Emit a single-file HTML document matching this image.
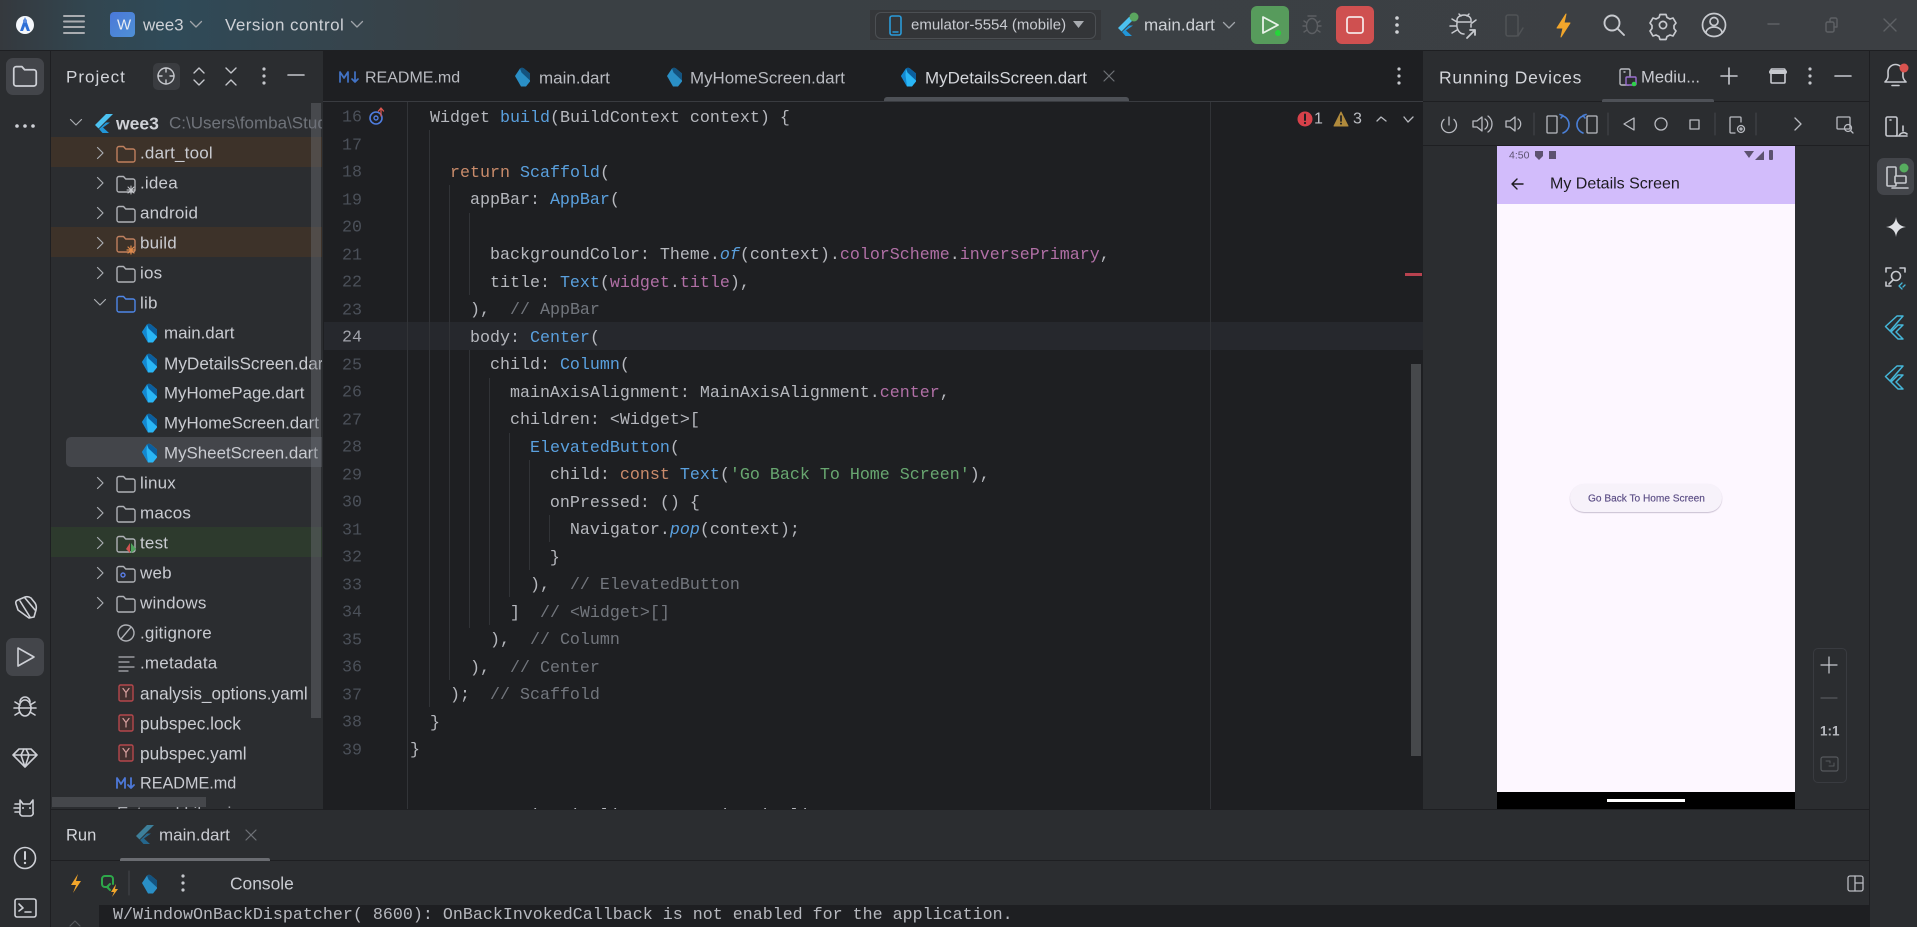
<!DOCTYPE html>
<html><head><meta charset="utf-8"><title>Android Studio</title>
<style>
html,body{margin:0;padding:0;background:#2b2d30;width:1917px;height:927px;overflow:hidden}
body{font-family:"Liberation Sans",sans-serif;color:#cdd0d6;position:relative}
.b{position:absolute}
.t{position:absolute;white-space:nowrap;line-height:24px;transform:translateY(-11.5px);font-size:17px;color:#c9cbd1}
pre{margin:0;font-family:"Liberation Mono",monospace;font-size:16.67px;line-height:27.5px;color:#b6b8be;position:absolute}
.k{color:#c98b6b}.c{color:#5aa0de}.f{color:#b06fa5}.s{color:#68a670}.m{color:#72767d}.i{color:#5aa0de;font-style:italic}
.n{position:absolute;left:330px;width:32px;text-align:right;font-family:"Liberation Mono",monospace;font-size:16.67px;line-height:24px;transform:translateY(-10.5px);color:#4b5059}
.g{position:absolute;width:1px;background:#313337}
svg{position:absolute;left:0;top:0}
</style></head><body>
<!-- top bar -->
<div class="b" style="left:0;top:0;width:1917px;height:50px;background:linear-gradient(90deg,#35393e 0,#324650 90px,#2f4a58 170px,#344650 290px,#3a4044 480px,#3c3f43 100%)"></div>
<div class="b" style="left:0;top:50px;width:1917px;height:1px;background:#1e1f22"></div>
<!-- panels -->
<div class="b" style="left:50px;top:51px;width:273px;height:758px;background:#2b2d30"></div>
<div class="b" style="left:323px;top:51px;width:1100px;height:758px;background:#1e1f22"></div>
<div class="b" style="left:1423px;top:51px;width:447px;height:758px;background:#2b2d30"></div>
<div class="b" style="left:50px;top:51px;width:1px;height:876px;background:#1e1f22"></div>
<div class="b" style="left:1869px;top:51px;width:1px;height:876px;background:#1e1f22"></div>
<div class="b" style="left:323px;top:51px;width:1px;height:758px;background:#1e1f22"></div>
<div class="b" style="left:323px;top:51px;width:1100px;height:50px;background:#1e1f22"></div>
<div class="b" style="left:323px;top:101px;width:1100px;height:1px;background:#393b40"></div>
<div class="b" style="left:1423px;top:101px;width:446px;height:1px;background:#1e1f22"></div>
<div class="b" style="left:1423px;top:145px;width:446px;height:1px;background:#1e1f22"></div>
<div class="b" style="left:51px;top:809px;width:1818px;height:1px;background:#1e1f22"></div>
<div class="b" style="left:51px;top:860px;width:1818px;height:1px;background:#1e1f22"></div>
<div class="b" style="left:99px;top:905px;width:1770px;height:22px;background:#1e1f22"></div>

<!-- sidebar active backgrounds -->
<div class="b" style="left:6px;top:58px;width:38px;height:37px;background:#43454a;border-radius:7px"></div>
<div class="b" style="left:6px;top:638px;width:38px;height:38px;background:#43454a;border-radius:7px"></div>
<div class="b" style="left:1877px;top:158px;width:37px;height:37px;background:#43454a;border-radius:7px"></div>
<div class="b" style="left:153px;top:63px;width:27px;height:27px;background:#3a3c40;border-radius:5px"></div>

<!-- top bar text -->
<div class="b" style="left:110px;top:12px;width:25px;height:25px;border-radius:4px;background:linear-gradient(135deg,#4a78d8,#4f90d6)"></div>
<div class="t" style="left:117px;top:25px;font-size:15px;color:#e8edf5">W</div>
<div class="t" style="left:143px;top:25px;color:#ced1d6">wee3</div>
<div class="t" style="left:225px;top:25px;letter-spacing:.45px;color:#ced1d6">Version control</div>
<div class="b" style="left:870px;top:10px;width:231px;height:30px;background:#35373a"></div>
<div class="b" style="left:875px;top:12px;width:219px;height:25px;border:1px solid #4c4f53;border-radius:6px;background:#333538"></div>
<div class="t" style="left:911px;top:25px;font-size:15px;color:#c9cbd1">emulator-5554 (mobile)</div>
<div class="t" style="left:1144px;top:25px;color:#ced1d6">main.dart</div>
<div class="b" style="left:1251px;top:6px;width:38px;height:38px;border-radius:6px;background:#579b5c"></div>
<div class="b" style="left:1336px;top:6px;width:38px;height:38px;border-radius:6px;background:#cf5050"></div>

<!-- project header and tree -->
<div class="t" style="left:66px;top:77px;letter-spacing:1px;color:#d3d5da">Project</div>
<div class="b" style="left:51px;top:102px;width:271px;height:707px;overflow:hidden">
  <div class="b" style="left:0;top:35px;width:271px;height:30px;background:#3d3229"></div>
  <div class="b" style="left:0;top:125px;width:271px;height:30px;background:#3d3229"></div>
  <div class="b" style="left:0;top:425px;width:271px;height:30px;background:#2d3a2d"></div>
  <div class="b" style="left:15px;top:335px;width:265px;height:30px;background:#43454a;border-radius:5px"></div>
  <div class="t" style="left:65px;top:21px;font-weight:bold;font-size:17.5px;color:#cfd1d6">wee3</div>
  <div class="t" style="left:118px;top:21px;font-size:17px;color:#6f737a">C:\Users\fomba\Studio</div>
  <div class="t" style="left:89px;top:51px;letter-spacing:.2px">.dart_tool</div>
  <div class="t" style="left:89px;top:81px;letter-spacing:.2px">.idea</div>
  <div class="t" style="left:89px;top:111px;letter-spacing:.2px">android</div>
  <div class="t" style="left:89px;top:141px;letter-spacing:.2px">build</div>
  <div class="t" style="left:89px;top:171px;letter-spacing:.2px">ios</div>
  <div class="t" style="left:89px;top:201px;letter-spacing:.2px">lib</div>
  <div class="t" style="left:113px;top:231px;font-size:16.9px">main.dart</div>
  <div class="t" style="left:113px;top:261px;font-size:17.2px">MyDetailsScreen.dart</div>
  <div class="t" style="left:113px;top:291px;font-size:16.85px">MyHomePage.dart</div>
  <div class="t" style="left:113px;top:321px;font-size:16.9px">MyHomeScreen.dart</div>
  <div class="t" style="left:113px;top:351px;font-size:16.9px">MySheetScreen.dart</div>
  <div class="t" style="left:89px;top:381px;letter-spacing:.2px">linux</div>
  <div class="t" style="left:89px;top:411px;letter-spacing:.2px">macos</div>
  <div class="t" style="left:89px;top:441px;letter-spacing:.2px">test</div>
  <div class="t" style="left:89px;top:471px;letter-spacing:.2px">web</div>
  <div class="t" style="left:89px;top:501px;letter-spacing:.2px">windows</div>
  <div class="t" style="left:89px;top:531px;letter-spacing:.2px">.gitignore</div>
  <div class="t" style="left:89px;top:561px;letter-spacing:.2px">.metadata</div>
  <div class="t" style="left:89px;top:591px;font-size:17.15px">analysis_options.yaml</div>
  <div class="t" style="left:89px;top:621px;font-size:17.3px">pubspec.lock</div>
  <div class="t" style="left:89px;top:651px;font-size:17.3px">pubspec.yaml</div>
  <div class="t" style="left:89px;top:681px;font-size:16.2px">README.md</div>
  <div class="t" style="left:66px;top:711px;color:#a9abb0">External Libraries</div>
  <div class="b" style="left:260px;top:1px;width:10px;height:615px;background:rgba(110,112,118,.42)"></div>
  <div class="b" style="left:1px;top:695px;width:154px;height:10px;background:#45474b"></div>
</div>

<!-- editor tabs -->
<div class="t" style="left:365px;top:77.5px;font-size:16px;color:#b9bbc1">README.md</div>
<div class="t" style="left:539px;top:77.5px;color:#b9bbc1">main.dart</div>
<div class="t" style="left:690px;top:77.5px;font-size:16.9px;color:#b9bbc1">MyHomeScreen.dart</div>
<div class="t" style="left:925px;top:77.5px;font-size:16.95px;color:#d3d5da">MyDetailsScreen.dart</div>
<div class="b" style="left:884px;top:97px;width:245px;height:4px;background:#4e5157;border-radius:3px 3px 0 0"></div>

<!-- editor -->
<div class="b" style="left:324px;top:322px;width:1099px;height:28px;background:#26282d"></div>
<div class="b" style="left:1210px;top:102px;width:1px;height:707px;background:#313337"></div>
<div class="g" style="left:407px;top:102px;height:707px;background:#323438"></div>
<div class="g" style="left:429px;top:130px;height:577px"></div>
<div class="g" style="left:449px;top:185px;height:495px"></div>
<div class="g" style="left:469px;top:213px;height:82px"></div>
<div class="g" style="left:469px;top:350px;height:278px"></div>
<div class="g" style="left:489px;top:378px;height:247px"></div>
<div class="g" style="left:509px;top:433px;height:164px"></div>
<div class="g" style="left:529px;top:460px;height:110px"></div>
<div class="g" style="left:549px;top:515px;height:27px"></div>

<div class="n" style="top:117px">16</div><div class="n" style="top:144.5px">17</div><div class="n" style="top:172px">18</div><div class="n" style="top:199.5px">19</div><div class="n" style="top:227px">20</div><div class="n" style="top:254.5px">21</div><div class="n" style="top:282px">22</div><div class="n" style="top:309.5px">23</div><div class="n" style="top:337px;color:#a1a3ab">24</div><div class="n" style="top:364.5px">25</div><div class="n" style="top:392px">26</div><div class="n" style="top:419.5px">27</div><div class="n" style="top:447px">28</div><div class="n" style="top:474.5px">29</div><div class="n" style="top:502px">30</div><div class="n" style="top:529.5px">31</div><div class="n" style="top:557px">32</div><div class="n" style="top:584.5px">33</div><div class="n" style="top:612px">34</div><div class="n" style="top:639.5px">35</div><div class="n" style="top:667px">36</div><div class="n" style="top:694.5px">37</div><div class="n" style="top:722px">38</div><div class="n" style="top:749.5px">39</div>

<pre style="left:410px;top:104.75px">  Widget <span class="c">build</span>(BuildContext context) {

    <span class="k">return</span> <span class="c">Scaffold</span>(
      appBar: <span class="c">AppBar</span>(

        backgroundColor: Theme.<span class="i">of</span>(context).<span class="f">colorScheme</span>.<span class="f">inversePrimary</span>,
        title: <span class="c">Text</span>(<span class="f">widget</span>.<span class="f">title</span>),
      ),  <span class="m">// AppBar</span>
      body: <span class="c">Center</span>(
        child: <span class="c">Column</span>(
          mainAxisAlignment: MainAxisAlignment.<span class="f">center</span>,
          children: &lt;Widget&gt;[
            <span class="c">ElevatedButton</span>(
              child: <span class="k">const</span> <span class="c">Text</span>(<span class="s">'Go Back To Home Screen'</span>),
              onPressed: () {
                Navigator.<span class="i">pop</span>(context);
              }
            ),  <span class="m">// ElevatedButton</span>
          ]  <span class="m">// &lt;Widget&gt;[]</span>
        ),  <span class="m">// Column</span>
      ),  <span class="m">// Center</span>
    );  <span class="m">// Scaffold</span>
  }
}</pre>
<div class="b" style="left:324px;top:802px;width:1099px;height:7px;overflow:hidden">
<pre style="left:186px;top:1.25px">mainAxisAlignment: MainAxisAlignment.center,</pre></div>

<div class="t" style="left:1314px;top:119px;font-size:16px;color:#bcbec4">1</div>
<div class="t" style="left:1353px;top:119px;font-size:16px;color:#bcbec4">3</div>
<div class="b" style="left:1405px;top:273px;width:17px;height:3px;background:#b8424f"></div>
<div class="b" style="left:1411px;top:364px;width:10px;height:392px;background:#46484b"></div>

<!-- running devices -->
<div class="t" style="left:1439px;top:77px;letter-spacing:.72px;font-size:17.5px;color:#d3d5da">Running Devices</div>
<div class="t" style="left:1641px;top:77px;font-size:16.6px;color:#c9cbd1">Mediu...</div>
<div class="b" style="left:1602px;top:99px;width:112px;height:3px;background:#4e5157;border-radius:2px 2px 0 0"></div>

<!-- phone -->
<div class="b" style="left:1497px;top:146px;width:298px;height:663px;background:#000;overflow:hidden">
  <div class="b" style="left:0;top:0;width:298px;height:58px;background:#d2bcfb"></div>
  <div class="b" style="left:0;top:58px;width:298px;height:588px;background:#fdf7ff"></div>
  <div class="b" style="left:110px;top:653px;width:78px;height:3px;background:#fff"></div>
  <div class="t" style="left:12px;top:8.500px;font-size:10.5px;color:#5d5270">4:50</div>
  <div class="t" style="left:53px;top:38px;font-size:16px;color:#1d1b20">My Details Screen</div>
  <div class="b" style="left:73px;top:338px;width:152px;height:28px;border-radius:15px;background:#f7f2fa;box-shadow:0 1px 1px rgba(90,70,110,.3),0 0 1px rgba(90,70,110,.08)"></div>
  <div class="t" style="left:91px;top:353px;font-size:10.15px;color:#5b4d85;-webkit-text-stroke:.15px #5b4d85">Go Back To Home Screen</div>
</div>
<div class="b" style="left:1813px;top:648px;width:32px;height:133px;border:1px solid #393b40;border-radius:5px"></div>
<div class="t" style="left:1820px;top:731px;font-size:13.5px;font-weight:bold;color:#b8bac0">1:1</div>

<!-- bottom -->
<div class="t" style="left:66px;top:835px;font-size:16.5px;color:#d3d5da">Run</div>
<div class="t" style="left:159px;top:835px;color:#c9cbd1">main.dart</div>
<div class="b" style="left:120px;top:858px;width:150px;height:3px;background:#6a6c71;border-radius:2px 2px 0 0"></div>
<div class="t" style="left:230px;top:882.5px;font-size:17.4px;color:#c9cbd1">Console</div>
<pre style="left:113px;top:902.25px">W/WindowOnBackDispatcher( 8600): OnBackInvokedCallback is not enabled for the application.</pre>

<!-- icons -->
<svg width="1917" height="927" viewBox="0 0 1917 927" fill="none" stroke-linecap="round" stroke-linejoin="round">
<defs>
<path id="fo" d="M-9 -5.5a2 2 0 0 1 2-2h4.5l2.2 2.5H7a2 2 0 0 1 2 2V6a2 2 0 0 1-2 2H-7a2 2 0 0 1-2-2z"/>
<path id="cr" d="M-2.5-5.5L3 0L-2.5 5.5"/>
<path id="cd" d="M-5.5-2.5L0 3L5.5-2.5"/>
<g id="dart"><path d="M-8-1L-3-8.5Q-1-10 1-8.5L7-3.5V4.500L3 9.500H-2Z" fill="#29b6f6"/><path d="M-3-8.500Q-1-10 1-8.500L7-3.500V3.500L-1.500-4.500Z" fill="#0b5f9e"/><path d="M-8-1L-3-8.500L-3.500-2L-2 9.500Z" fill="#1487cf"/></g>
<g id="dartd"><path d="M-8-1L-3-8.500Q-1-10 1-8.500L7-3.500V4.500L3 9.500H-2Z" fill="#2a8fc6"/><path d="M-3-8.500Q-1-10 1-8.500L7-3.500V3.500L-1.500-4.500Z" fill="#14537f"/></g>
<g id="fl"><path d="M3-10L-8 1L-4.5 4.5L10-10Z" fill="#4cc2f1"/><path d="M3-1.5L-4 5L-0.5 9H6L0 3.5L7-1.5Z" fill="#2196d8"/></g>
<g id="yaml"><rect x="-7" y="-8" width="14" height="16" rx="1.5" stroke="#b5474c" stroke-width="1.4" fill="#43302f"/><path d="M-3-4.5L0-.5L3-4.5M0-.5V4" stroke="#d8a0a0" stroke-width="1.2"/></g>
<path id="fout" d="M12-10H18L5 5L.5 .5ZM13-1H18L11 6L18 13H13L6 6Z"/>
</defs>
<!-- top left -->
<circle cx="25" cy="25" r="9" fill="#f4f7fb"/><path d="M25 17L20 31H23L25 26L27 31H30Z" fill="#2e6fd6"/><circle cx="25" cy="21" r="2" fill="#5d8de0"/>
<g stroke="#a9acb0" stroke-width="2"><path d="M64 16H84M64 21.5H84M64 27H84M64 33H84"/></g>
<g stroke="#a0a5aa" stroke-width="1.3"><use href="#cd" x="196" y="24"/><use href="#cd" x="357" y="24"/><use href="#cd" x="1229" y="25"/></g>
<!-- device selector -->
<rect x="890" y="16" width="11" height="19" rx="2" stroke="#2a9ad8" stroke-width="1.6"/><path d="M893 32H898" stroke="#2a9ad8" stroke-width="1.4"/>
<path d="M1073 21H1084L1078.5 28Z" fill="#a8abb0"/>
<use href="#fl" transform="translate(1126,27)"/><circle cx="1134" cy="17" r="4.5" fill="#5ba65f"/>
<path d="M1263 17L1278 25L1263 33Z" stroke="#e8f2e8" stroke-width="1.8"/><circle cx="1278" cy="33" r="3" fill="#25d63a"/>
<g stroke="#5c5f63" stroke-width="1.4"><ellipse cx="1312" cy="26" rx="5.5" ry="7.5"/><path d="M1308 16L1316 16M1304 21L1307 23M1320 21L1317 23M1303 26H1306M1321 26H1318M1304 32L1307 30M1320 32L1317 30"/></g>
<rect x="1347" y="17" width="16" height="16" rx="2.5" stroke="#f5e4e4" stroke-width="1.8"/>
<g fill="#d0d2d6"><circle cx="1397" cy="18" r="1.8"/><circle cx="1397" cy="25" r="1.8"/><circle cx="1397" cy="32" r="1.8"/></g>
<g stroke="#c8cacf" stroke-width="1.5"><path d="M1457 20a7 5 0 0 1 14 0v2h-14zM1461 16l-2-2M1467 16l2-2M1457 23a7 9 0 0 0 7 11M1471 24v3M1452 19l5 3M1450 26h6M1452 33l5-3M1476 20l-4 3"/><path d="M1467 38L1475 30M1470 30h5v5" stroke-width="1.8"/></g>
<g stroke="#505356" stroke-width="1.5"><rect x="1506" y="15" width="12" height="21" rx="2"/><path d="M1518 36l5-8"/></g>
<path d="M1566 14L1557 28H1563L1561 37L1570 23H1564Z" fill="#f2a62b" stroke="#f2a62b" stroke-width="1"/>
<g stroke="#c8cacf" stroke-width="1.9"><circle cx="1612" cy="23" r="7.5"/><path d="M1618 29L1624 35"/></g>
<g stroke="#c8cacf" stroke-width="1.7" transform="translate(-1,0)"><circle cx="1664" cy="25" r="3.6"/><path d="M1661 15h6l1 3 3 1.5 3-1 3 5-2 2.5v3l2 2.5-3 5-3-1-3 1.5-1 3h-6l-1-3-3-1.5-3 1-3-5 2-2.5v-3l-2-2.5 3-5 3 1 3-1.5z" transform="translate(0,-.5)"/></g>
<g stroke="#c8cacf" stroke-width="1.7"><circle cx="1714" cy="25" r="11.5"/><circle cx="1714" cy="21.5" r="4"/><path d="M1706 33a8 6 0 0 1 16 0"/></g>
<g stroke="#5e6165" stroke-width="1.4"><path d="M1768 24H1779"/><rect x="1826" y="22" width="8" height="10" rx="1.5"/><path d="M1830 22v-2.5a1.5 1.5 0 0 1 1.5-1.5h4a1.5 1.5 0 0 1 1.5 1.5V27h-3"/><path d="M1884 19L1896 31M1896 19L1884 31"/></g>

<!-- left strip -->
<g stroke="#ced0d6" stroke-width="1.7"><use href="#fo" transform="translate(25,76) scale(1.25)" stroke-width="1.4"/></g>
<g fill="#ced0d6"><circle cx="17" cy="126" r="1.8"/><circle cx="25" cy="126" r="1.8"/><circle cx="33" cy="126" r="1.8"/></g>
<g stroke="#ced0d6" stroke-width="1.6">
<path d="M16 604Q15 601 18 600L25 597Q28 596 31 598L35 603Q37 606 36 610L34 617L29 618L18 610Z M20 601L30 617M25 598L35 610"/>
<path d="M18 648L34 657L18 666Z"/>
<ellipse cx="25" cy="708" rx="6" ry="8"/><path d="M20 702a5 5 0 0 1 10 0M15 702l5 3M35 702l-5 3M14 708h5M36 708h-5M15 715l5-3M35 715l-5-3M19 708H31"/>
<path d="M19 749H31L37 755L25 767L13 755ZM13 755H37M21 755L25 767L29 755M21 755L24 749M29 755L26 749"/>
<path d="M20 800L23 804H30L33 800V812A3 3 0 0 1 30 816H23A3 3 0 0 1 20 812ZM15 804H19M14 808H19M15 812H19"/>
<circle cx="25" cy="858" r="10.5"/><path d="M25 852V859" stroke-width="2"/>
<rect x="15" y="899" width="21" height="18" rx="2"/><path d="M19 904L23 908L19 911M25 912H31"/>
</g>
<circle cx="25" cy="863" r="1.2" fill="#ced0d6"/>
<circle cx="23" cy="808" r="1" fill="#ced0d6"/><circle cx="30" cy="808" r="1" fill="#ced0d6"/>
<!-- project header -->
<g stroke="#c5c7cc" stroke-width="1.4"><circle cx="166" cy="76" r="8"/><path d="M166 68V72M166 80V84M158 76H162M170 76H174"/>
<path d="M194 73L199 68L204 73M194 80L199 85L204 80"/><path d="M226 68L231 73L236 68M226 85L231 80L236 85"/><path d="M288 75H304" stroke-width="1.6"/></g>
<g fill="#c5c7cc"><circle cx="264" cy="69" r="1.6"/><circle cx="264" cy="76" r="1.6"/><circle cx="264" cy="83" r="1.6"/></g>
<!-- tree -->
<g stroke="#a9acb1" stroke-width="1.2"><use href="#cd" x="76" y="122"/><use href="#cr" x="100" y="153"/><use href="#cr" x="100" y="183"/><use href="#cr" x="100" y="213"/><use href="#cr" x="100" y="243"/><use href="#cr" x="100" y="273"/><use href="#cd" x="100" y="302"/><use href="#cr" x="100" y="483"/><use href="#cr" x="100" y="513"/><use href="#cr" x="100" y="543"/><use href="#cr" x="100" y="573"/><use href="#cr" x="100" y="603"/></g>
<use href="#fl" transform="translate(103,124)"/>
<g stroke="#afb1b6" stroke-width="1.4"><use href="#fo" x="126" y="154" stroke="#c0805e"/><use href="#fo" x="126" y="184"/><use href="#fo" x="126" y="214"/><use href="#fo" x="126" y="244" stroke="#c0805e"/><use href="#fo" x="126" y="274"/><use href="#fo" x="126" y="304" stroke="#4e86e8"/><use href="#fo" x="126" y="484"/><use href="#fo" x="126" y="514"/><use href="#fo" x="126" y="544"/><use href="#fo" x="126" y="574"/><use href="#fo" x="126" y="604"/></g>
<path d="M131 186L131 194M127 190H135M128 187L134 193M134 187L128 193" stroke="#c8cacf" stroke-width="1"/>
<path d="M131 246V254M127 250H135M128 247L134 253M134 247L128 253" stroke="#e08a4a" stroke-width="1.2"/>
<path d="M130 543L126 549L130 553Z" fill="#d0524f"/><path d="M131 543L136 549L131 553Z" fill="#4ea35b"/>
<circle cx="123" cy="575" r="2" stroke="#5a7ee8" stroke-width="1.4"/>
<use href="#dart" transform="translate(150,333)"/><use href="#dart" transform="translate(150,363)"/><use href="#dart" transform="translate(150,393)"/><use href="#dart" transform="translate(150,423)"/><use href="#dart" transform="translate(150,453)"/>
<g stroke="#afb1b6" stroke-width="1.4"><circle cx="126" cy="633" r="8"/><path d="M121 639L131 627"/><path d="M119 657H134M119 662H129M119 667H134M119 671H128" stroke-width="1.3"/></g>
<use href="#yaml" transform="translate(126,693)"/><use href="#yaml" transform="translate(126,723)"/><use href="#yaml" transform="translate(126,753)"/>
<g stroke="#4d78d8" stroke-width="1.8"><path d="M117 788V778L121 784L125 778V788M131 778V788M128 785L131 788L134 785"/></g>
<!-- editor tabs -->
<g stroke="#4273c6" stroke-width="1.7"><path d="M340 82V72L344 78L348 72V82M355 72V82M352 79L355 82L358 79"/></g>
<use href="#dartd" transform="translate(523,77)"/><use href="#dartd" transform="translate(675,77)"/><use href="#dart" transform="translate(909,77)"/>
<path d="M1104 71L1114 81M1114 71L1104 81" stroke="#6e7176" stroke-width="1.2"/>
<g fill="#c5c7cc"><circle cx="1399" cy="69" r="1.6"/><circle cx="1399" cy="76" r="1.6"/><circle cx="1399" cy="83" r="1.6"/></g>
<!-- gutter icon -->
<circle cx="376" cy="118" r="6" stroke="#4f7de0" stroke-width="1.6"/><circle cx="376" cy="118" r="2" stroke="#4f7de0" stroke-width="1.4"/><path d="M381 116V109M378.5 111L381 108L383.5 111" stroke="#d9564f" stroke-width="1.3"/>
<!-- indicators -->
<circle cx="1305" cy="119" r="7.5" fill="#d7414a"/><path d="M1305 114.5V120" stroke="#1e1f22" stroke-width="2"/><circle cx="1305" cy="123" r="1.1" fill="#1e1f22"/>
<path d="M1341 112L1348 126H1334Z" fill="#b08a3c" stroke="#b08a3c"/><path d="M1341 116V121" stroke="#1e1f22" stroke-width="1.7"/><circle cx="1341" cy="123.6" r="1" fill="#1e1f22"/>
<g stroke="#b8bac0" stroke-width="1.3"><path d="M1377 121L1381 117L1386 121M1404 117L1408 122L1413 117"/></g>
<!-- running devices bar -->
<g stroke="#b9bbc1" stroke-width="1.4"><rect x="1620" y="69" width="10" height="16" rx="1.5"/><path d="M1624 72h1"/></g>
<rect x="1626" y="77" width="10" height="8" rx="1" fill="#2b2d30" stroke="#9a6fd0" stroke-width="1.4"/><circle cx="1634" cy="84" r="2.3" fill="#2fd14a"/>
<g stroke="#c8cacf" stroke-width="1.6"><path d="M1721 76H1737M1729 68V84M1835 76H1851"/><rect x="1771" y="69" width="14" height="14" rx="1"/><path d="M1771 72H1785" stroke-width="4"/></g>
<g fill="#c5c7cc"><circle cx="1810" cy="69" r="1.6"/><circle cx="1810" cy="76" r="1.6"/><circle cx="1810" cy="83" r="1.6"/></g>
<!-- running devices toolbar -->
<g stroke="#b9bbc1" stroke-width="1.3">
<path d="M1449 117V125M1444 119.5a7.5 7.5 0 1 0 10 0"/>
<path d="M1473 121H1477L1482 117V131L1477 127H1473ZM1485 119a6 6 0 0 1 0 10M1488 116a10 10 0 0 1 0 16"/>
<path d="M1506 121H1510L1515 117V131L1510 127H1506ZM1518 119a6 6 0 0 1 0 10"/>
<rect x="1547" y="116" width="10" height="17" rx="1"/><rect x="1587" y="116" width="10" height="17" rx="1"/>
<path d="M1624 124L1634 118V130Z"/><circle cx="1661" cy="124" r="6"/><rect x="1690" y="120" width="9" height="9"/>
<path d="M1741 122V118a1 1 0 0 0-1-1H1731a1 1 0 0 0-1 1V132a1 1 0 0 0 1 1H1735"/>
<path d="M1795 118L1801 124L1795 130"/>
<rect x="1837" y="117" width="13" height="12" rx="1"/><circle cx="1848" cy="128" r="3.5"/><path d="M1851 131L1853 133"/>
<circle cx="1741" cy="129" r="3.500"/><circle cx="1741" cy="129" r="1"/>
</g>
<path d="M1563 116a9 9 0 0 1 0 17M1561 118l2-2.500-3-1" stroke="#4a7fd6" stroke-width="1.6"/>
<path d="M1583 116a9 9 0 0 0 0 17M1585 118l-2-2.500 3-1" stroke="#4a7fd6" stroke-width="1.6"/>
<g stroke="#44474b"><path d="M1534 113V135M1608 113V135M1715 113V135M1756 113V135"/></g>
<!-- phone -->
<path d="M1535 151H1543V156L1539 160L1535 156Z" fill="#5d5270"/>
<rect x="1549" y="151" width="7" height="8" fill="#5d5270"/>
<path d="M1744 151H1754L1749 158Z" fill="#5d5270"/><path d="M1764 151V160H1755Z" fill="#5d5270"/><rect x="1769" y="150" width="4" height="10" rx="1" fill="#5d5270"/>
<path d="M1523 184H1512M1517 179L1512 184L1517 189" stroke="#1d1b20" stroke-width="1.4"/>
<!-- zoom controls -->
<g stroke="#c8cacf" stroke-width="1.2"><path d="M1821 665H1837M1829 657V673"/></g>
<path d="M1821 698H1837" stroke="#56595d" stroke-width="1.2"/>
<rect x="1821" y="757" width="17" height="14" rx="2" stroke="#56595d" stroke-width="1.2"/><path d="M1826 761H1830V763M1829 766H1834V763" stroke="#56595d"/>
<!-- right strip -->
<g stroke="#c8cacf" stroke-width="1.6">
<path d="M1885 82C1889 78 1888 76 1888 72A7.500 7.500 0 0 1 1903 72C1903 76 1902 78 1906 82ZM1892 85.500H1899"/>
<rect x="1886" y="117" width="11" height="19" rx="1.500"/><path d="M1890 120h1M1896 136H1907M1899 136A5 5 0 0 1 1907 134M1903 126V131"/>
<rect x="1887" y="167" width="9" height="19" rx="1"/><rect x="1895" y="176" width="11" height="7" rx="1" fill="#43454a"/><path d="M1892 188H1908"/>
<path d="M1886 272V268H1891M1900 268H1905V272M1886 282V286H1891"/><circle cx="1896" cy="276" r="4.500"/><path d="M1893 280L1889 284"/>
</g>
<circle cx="1904" cy="68" r="4.500" fill="#d9534f"/><circle cx="1904" cy="168" r="4.500" fill="#57ad5f"/>
<path d="M1896 217Q1897 226 1906 227Q1897 228 1896 237Q1895 228 1886 227Q1895 226 1896 217Z" fill="#dfe1e5"/>
<path d="M1902 283L1899 286L1902 289M1905 285L1903 287" stroke="#45b7d9" stroke-width="1.3"/>
<g stroke="#45b7d9" stroke-width="1.5"><use href="#fout" x="1885" y="326"/><use href="#fout" x="1885" y="376"/></g>
<!-- bottom -->
<use href="#fl" opacity=".55" transform="translate(144,835)"/>
<path d="M246 830L256 840M256 830L246 840" stroke="#6e7176" stroke-width="1.2"/>
<path d="M78 874L71 885H76L73 893L81 881H76Z" fill="#f2a62b"/>
<path d="M113 884V879a3 3 0 0 0-3-3H105a3 3 0 0 0-3 3V884a3 3 0 0 0 3 3H108M110 884L107 887L110 890" stroke="#2ea84a" stroke-width="2"/>
<path d="M116 884L111 892H114L112 897L118 889H115Z" fill="#f2a62b"/>
<path d="M129 871V895" stroke="#44474b"/>
<use href="#dartd" transform="translate(150,884)"/>
<g fill="#c5c7cc"><circle cx="183" cy="876" r="1.6"/><circle cx="183" cy="883" r="1.6"/><circle cx="183" cy="890" r="1.6"/></g>
<g stroke="#b9bbc1" stroke-width="1.3"><rect x="1848" y="876" width="15" height="15" rx="2"/><path d="M1855 876V891M1855 883H1863"/></g>
<path d="M70 926L75 921L80 926" stroke="#55585c" stroke-width="1.2"/>
</svg>
</body></html>
